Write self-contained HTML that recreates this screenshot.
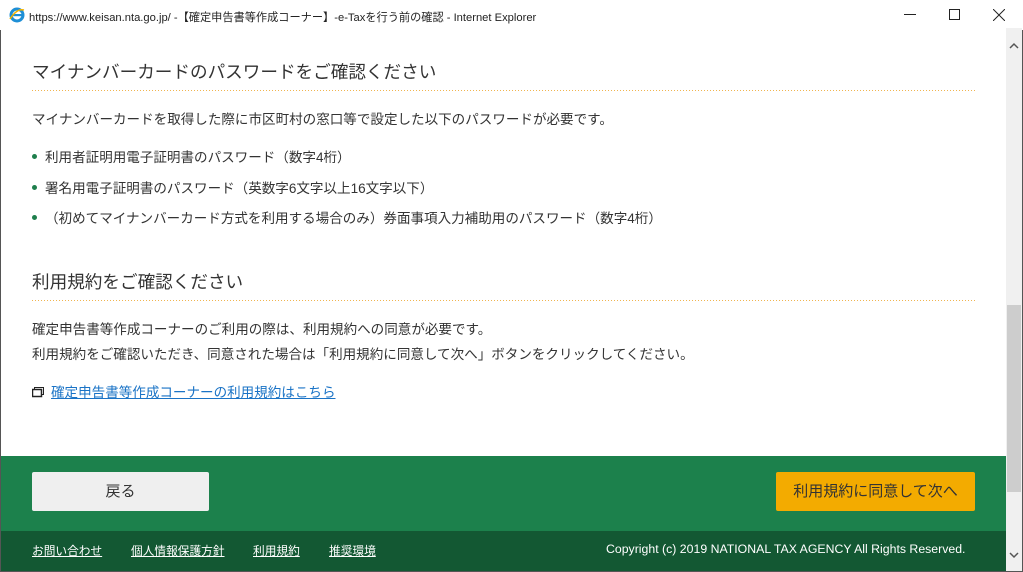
<!DOCTYPE html>
<html><head><meta charset="utf-8"><style>
*{margin:0;padding:0;box-sizing:border-box}
body{width:1023px;height:572px;overflow:hidden;background:#fff;font-family:"Liberation Sans","Noto Sans CJK JP",sans-serif;color:#333;position:relative}
.win{position:absolute;inset:0;border:1px solid #555;border-top-color:#2b4f4a}
.title{position:absolute;left:0;top:0;width:1023px;height:30px;background:#fff;font-size:11.2px;color:#222}
.title .t{position:absolute;left:29px;top:9px}
.ctl{position:absolute}
.sb{position:absolute;left:1006px;top:28px;width:16px;height:543px;background:#f0f0f0}
.thumb{position:absolute;left:1007px;top:305px;width:14px;height:187px;background:#cdcdcd}
.h{position:absolute;left:32px;font-size:17.6px;color:#333}
.dot{position:absolute;left:32px;width:943px;height:1px;background:repeating-linear-gradient(90deg,#f0b450 0 1px,transparent 1px 3px)}
.p{position:absolute;left:32px;font-size:13.55px;color:#333}
.li{position:absolute;left:32px;font-size:13.55px;color:#333}
.li:before{content:"";display:inline-block;width:5px;height:5px;border-radius:50%;background:#1e7f4c;margin-right:8px;vertical-align:middle;position:relative;top:-2px}
.green{position:absolute;left:1px;top:456px;width:1005px;height:75px;background:#1c814c}
.dark{position:absolute;left:1px;top:531px;width:1005px;height:40px;background:#135833}
.btn1{position:absolute;left:32px;top:472px;width:177px;height:39px;background:#efefef;border-radius:2px;font-size:15px;text-align:center;line-height:39px;color:#333}
.btn2{position:absolute;left:776px;top:472px;width:199px;height:39px;background:#f3ab00;border-radius:2px;font-size:15px;text-align:center;line-height:39px;color:#333}
.fl{position:absolute;top:542px;font-size:11.7px;color:#fff;text-decoration:underline}
</style></head><body>
<div class="win"></div>
<div class="title">
<svg style="position:absolute;left:8px;top:6px" width="18" height="18" viewBox="0 0 18 18"><circle cx="9" cy="9" r="6" fill="none" stroke="#1e8fd6" stroke-width="3"/><rect x="4" y="8" width="10" height="2.2" fill="#1e8fd6"/><path d="M2 13 Q9 2 16 4" fill="none" stroke="#f2b300" stroke-width="1.5"/></svg>
<span class="t">https://www.keisan.nta.go.jp/ -【確定申告書等作成コーナー】-e-Taxを行う前の確認 - Internet Explorer</span>
<svg class="ctl" style="left:904px;top:14px" width="12" height="2"><rect width="12" height="1" fill="#222"/></svg>
<svg class="ctl" style="left:949px;top:9px" width="11" height="11"><rect x=".5" y=".5" width="10" height="10" fill="none" stroke="#222"/></svg>
<svg class="ctl" style="left:993px;top:9px" width="12" height="12"><path d="M0 0L12 12M12 0L0 12" stroke="#222"/></svg>
</div>
<div class="sb"></div><div class="thumb"></div>
<svg style="position:absolute;left:1009px;top:42px" width="10" height="7"><path d="M1 6L5 2L9 6" fill="none" stroke="#555" stroke-width="1.5"/></svg>
<svg style="position:absolute;left:1009px;top:498px;display:none" width="10" height="7"></svg>
<svg style="position:absolute;left:1009px;top:552px" width="10" height="7"><path d="M1 1L5 5L9 1" fill="none" stroke="#555" stroke-width="1.5"/></svg>
<div class="h" style="top:59px">マイナンバーカードのパスワードをご確認ください</div>
<div class="dot" style="top:90px"></div>
<div class="p" style="top:108px">マイナンバーカードを取得した際に市区町村の窓口等で設定した以下のパスワードが必要です。</div>
<div class="li" style="top:146px">利用者証明用電子証明書のパスワード（数字4桁）</div>
<div class="li" style="top:177px">署名用電子証明書のパスワード（英数字6文字以上16文字以下）</div>
<div class="li" style="top:207px">（初めてマイナンバーカード方式を利用する場合のみ）券面事項入力補助用のパスワード（数字4桁）</div>
<div class="h" style="top:269px">利用規約をご確認ください</div>
<div class="dot" style="top:300px"></div>
<div class="p" style="top:318px">確定申告書等作成コーナーのご利用の際は、利用規約への同意が必要です。</div>
<div class="p" style="top:343px">利用規約をご確認いただき、同意された場合は「利用規約に同意して次へ」ボタンをクリックしてください。</div>
<svg style="position:absolute;left:32px;top:387px" width="12" height="11"><rect x="2.5" y=".5" width="9" height="7" fill="none" stroke="#222"/><rect x=".5" y="2.5" width="9" height="7" fill="#fff" stroke="#222" stroke-width="1.5"/></svg>
<div class="p" style="left:51px;top:381px;color:#1a73c6;text-decoration:underline">確定申告書等作成コーナーの利用規約はこちら</div>
<div class="green"></div><div class="dark"></div>
<div class="btn1">戻る</div>
<div class="btn2">利用規約に同意して次へ</div>
<div class="fl" style="left:32px">お問い合わせ</div>
<div class="fl" style="left:131px">個人情報保護方針</div>
<div class="fl" style="left:253px">利用規約</div>
<div class="fl" style="left:329px">推奨環境</div>
<div class="fl" style="left:606px;top:542px;text-decoration:none;font-size:12.3px">Copyright (c) 2019 NATIONAL TAX AGENCY All Rights Reserved.</div>
</body></html>
